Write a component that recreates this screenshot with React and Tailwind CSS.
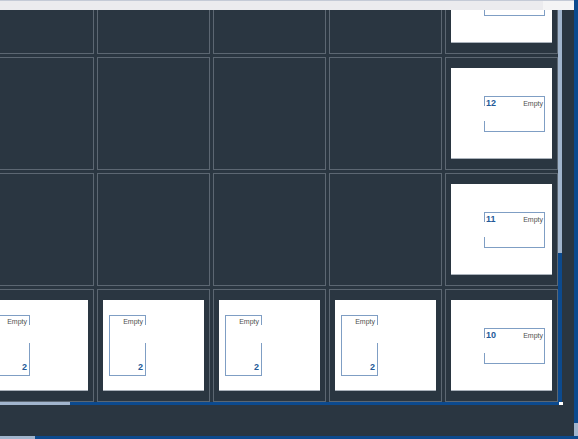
const ROWS = [
  { label: "13", kind: "h" },
  { label: "12", kind: "h" },
  { label: "11", kind: "h" },
  { label: "10", kind: "h" },
];

function HorizontalSlot({ label }) {
  return (
    <div className="flex w-[61px] h-[36px] border-y border-r border-[#7f9ec4]">
      {/* left edge has an opening in the middle */}
      <div className="flex flex-col w-px">
        <div className="h-[9px] bg-[#7f9ec4]" />
        <div className="flex-1" />
        <div className="h-[10px] bg-[#7f9ec4]" />
      </div>
      <div className="flex-1 flex items-start justify-between pl-[1px] pr-[1px] pt-[2px]">
        <span className="text-[9px] leading-none font-semibold text-[#245a98]">{label}</span>
        <span className="text-[7px] leading-none text-[#505050] mt-[1px]">Empty</span>
      </div>
    </div>
  );
}

function VerticalSlot({ label }) {
  return (
    <div className="flex w-[37px] h-[61px] border-y border-l border-[#7f9ec4]">
      <div className="flex-1 flex flex-col items-end justify-between pr-[2px] pt-[2px] pb-[3px]">
        <span className="text-[7px] leading-none text-[#505050]">Empty</span>
        <span className="text-[9px] leading-none font-semibold text-[#245a98]">{label}</span>
      </div>
      {/* right edge has an opening in the middle */}
      <div className="flex flex-col w-px">
        <div className="h-[9px] bg-[#7f9ec4]" />
        <div className="flex-1" />
        <div className="h-[32px] bg-[#7f9ec4]" />
      </div>
    </div>
  );
}

function Cell({ children }) {
  return (
    <div className="w-[113px] h-[113px] border border-[#5c6772] flex items-center justify-center">
      {children}
    </div>
  );
}

function Card({ children, pad }) {
  return (
    <div className={`w-[101px] h-[91px] bg-white border-b border-[#aab2bb] flex flex-col ${pad}`}>
      {children}
    </div>
  );
}

export default function App() {
  return (
    <div
      className="flex w-[578px] h-[439px] bg-[#2a3641] overflow-hidden"
      style={{ fontFamily: '"Liberation Sans", Arial, sans-serif' }}
    >
      <div className="flex flex-col w-[574px]">
        {/* top bar */}
        <div className="flex h-[10px] border-t border-[#c4cad6]">
          <div className="flex-1 bg-[#ebebee]" />
          <div className="w-[31px] bg-[#f4f4f5]" />
        </div>

        <div className="flex h-[392px]">
          <div className="w-[558px] overflow-hidden">
            <div className="grid grid-cols-[repeat(5,113px)] gap-[3px] -ml-[19px] -mt-[69px] w-max">
              {ROWS.map((row, r) =>
                [0, 1, 2, 3, 4].map((c) => {
                  if (c === 4) {
                    return (
                      <Cell key={`${r}-${c}`}>
                        <Card pad="pt-[28px] pl-[33px]">
                          <HorizontalSlot label={row.label} />
                        </Card>
                      </Cell>
                    );
                  }
                  if (r === 3) {
                    return (
                      <Cell key={`${r}-${c}`}>
                        <Card pad="pt-[15px] pl-[6px]">
                          <VerticalSlot label="2" />
                        </Card>
                      </Cell>
                    );
                  }
                  return <Cell key={`${r}-${c}`} />;
                })
              )}
            </div>
          </div>
          {/* inner vertical scrollbar */}
          <div className="flex flex-col w-[4px]">
            <div className="h-[243px] bg-[#a1b5cd]" />
            <div className="flex-1 bg-[#0c4a8e]" />
          </div>
        </div>

        {/* inner horizontal scrollbar */}
        <div className="flex h-[3px]">
          <div className="w-[70px] bg-[#a1b5cd]" />
          <div className="w-[489px] bg-[#0c4a8e]" />
          <div className="w-[4px] bg-white" />
        </div>

        <div className="flex-1" />

        {/* outer horizontal scrollbar */}
        <div className="flex h-[3px]">
          <div className="w-[35px] bg-[#a1b5cd]" />
          <div className="flex-1 bg-[#0c4a8e]" />
        </div>
      </div>

      {/* outer vertical scrollbar */}
      <div className="flex flex-col w-[4px]">
        <div className="flex-1 bg-[#0c4a8e]" />
        <div className="h-[13px] bg-[#a1b5cd]" />
        <div className="h-[3px] bg-[#0c4a8e]" />
      </div>
    </div>
  );
}
